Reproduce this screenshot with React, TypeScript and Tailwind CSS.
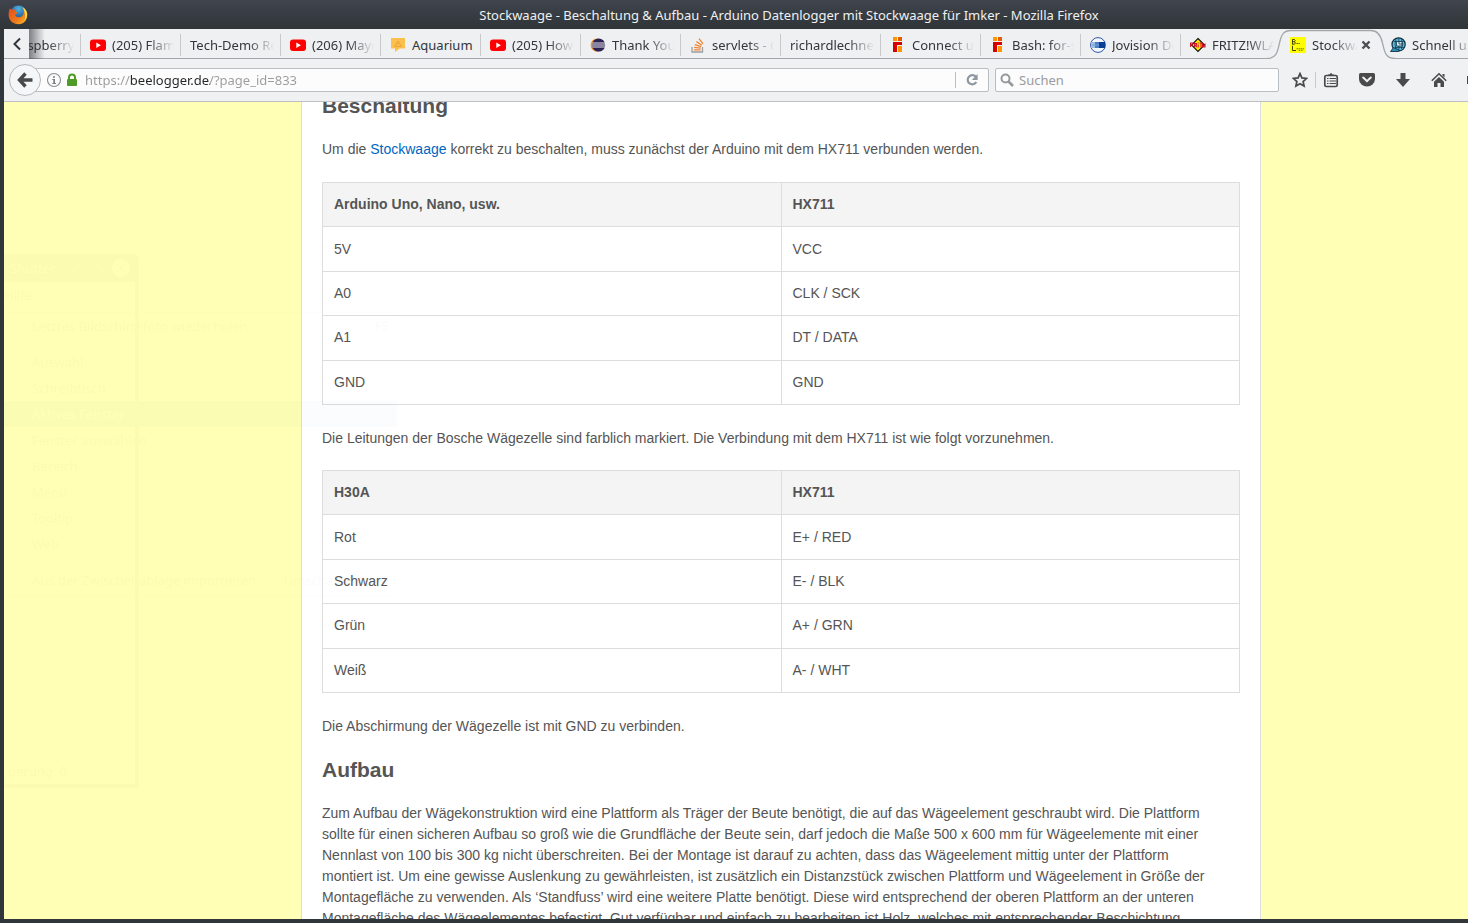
import type { ReactNode } from 'react';

const YouTube = () => (
  <svg viewBox="0 0 16 16" className="size-4 shrink-0">
    <rect x="0" y="2.5" width="16" height="11.5" rx="3" fill="#f00" />
    <path d="M6.3 5.6v5.3l4.6-2.65z" fill="#fff" />
  </svg>
);

const Aquarium = () => (
  <svg viewBox="0 0 16 16" className="size-4 shrink-0">
    <path d="M1 1h14v10.5H9.5L5 15v-3.5H1z" fill="#fcc14c" />
    <path d="M8 4l3.5 5.5h-7z" fill="none" stroke="#eba440" />
    <path d="M8 6v2" stroke="#eba440" />
  </svg>
);

const Eclipse = () => (
  <svg viewBox="0 0 16 16" className="size-4 shrink-0">
    <circle cx="7.2" cy="8" r="6.6" fill="#f7941e" />
    <circle cx="8.6" cy="8" r="6.6" fill="#2c2255" />
    <path d="M2.3 6h13M2 8h13.4M2.3 10h13" stroke="#fff" strokeWidth="0.9" />
  </svg>
);

const StackOverflow = () => (
  <svg viewBox="0 0 16 16" className="size-4 shrink-0">
    <path d="M2 10v5h10.5v-5" fill="none" stroke="#9a9fa3" strokeWidth="1.3" />
    <path d="M4 12.8h6.6M4.1 10.4l6.6.7M4.8 7.7l6.3 1.9M6.4 4.6l5.5 3.7M9 1.6l4 5.3" stroke="#f08534" strokeWidth="1.3" />
  </svg>
);

const Blocks = () => (
  <svg viewBox="0 0 16 16" className="size-4 shrink-0" shapeRendering="crispEdges">
    <path d="M3 0h4v4H3zM8 9h4v6H8z" fill="#ff9500" />
    <path d="M8 0h4v4H8z" fill="#e85b00" />
    <path d="M3 5h9v3H7v7H3z" fill="#d60000" />
  </svg>
);

const Jovision = () => (
  <svg viewBox="0 0 16 16" className="size-4 shrink-0">
    <circle cx="8" cy="8" r="7.4" fill="#f4f7fb" stroke="#2b57a5" strokeWidth="1" />
    <rect x="1" y="5" width="14" height="6" fill="#4a80c4" />
    <rect x="1" y="5" width="4" height="6" fill="#9dbde4" />
    <rect x="9" y="5" width="6" height="6" fill="#0d3f94" />
    <path d="M2 8h7" stroke="#7aa3d8" />
  </svg>
);

const Fritz = () => (
  <svg viewBox="0 0 16 16" className="size-4 shrink-0">
    <path d="M8 1.5l6.5 6.5L8 14.5 1.5 8z" fill="#ffe600" stroke="#111" strokeWidth="1.1" />
    <path
      d="M.5 10V6h3M.5 8h2M4.500 10V6.500H6.500V8H5l1.800 2.200M8.200 7.500v3M8.200 5.500v1M9.500 6h3M11 6v4.500M12.500 6.500v3.500h2.500V6.500"
      fill="none"
      stroke="#d8102c"
      strokeWidth="1.1"
    />
  </svg>
);

const BeeLogger = () => (
  <svg viewBox="0 0 16 16" className="size-4 shrink-0">
    <rect width="16" height="16" fill="#ff0" />
    <path d="M2.500 2.500h2q1.500 1 0 2.200h-2M4.500 4.700q1.800 1.300 0 2.500h-2M2.500 2.500v5M2.500 8.800v4.700h3.500" fill="none" stroke="#333300" strokeWidth="0.9" />
    <path d="M6.500 6.500h1.300M8.500 6.500h1.300" stroke="#55550a" strokeWidth="1.200" />
    <path d="M6.500 11.800h8M8.700 13.300h1.600M11 13.300h1.600" stroke="#6b6b12" strokeWidth="0.900" strokeDasharray="1.500 0.500" />
  </svg>
);

const Globe = () => (
  <svg viewBox="0 0 16 16" className="size-4 shrink-0">
    <circle cx="8.6" cy="7.4" r="6.6" fill="#5bb9dc" stroke="#123244" strokeWidth="1.2" />
    <path d="M4 4.500h9.500M5 10.500h9M8.800 1.500v12M6 2.500q-2 5 0 9.500M11.500 2.500q2.200 5 0 9.500" fill="none" stroke="#123244" strokeWidth="0.7" />
    <path d="M6.500 4.500h5.500v4.500H6.500z" fill="#d8f0fa" stroke="#123244" strokeWidth="0.8" />
    <path d="M9 4.500v2.500h3" fill="none" stroke="#123244" strokeWidth="0.8" />
    <path d="M.5 14.500L3.500 10.500l6.500 3-2 1z" fill="#2d8fb5" stroke="#123244" strokeWidth="0.9" />
  </svg>
);

const tabsBefore: { title: string; icon?: ReactNode; fits?: boolean }[] = [
  { title: 'Raspberry P', icon: <span className="size-4 shrink-0" /> },
  { title: '(205) Flame', icon: <YouTube /> },
  { title: 'Tech-Demo Re' },
  { title: '(206) Mayd', icon: <YouTube /> },
  { title: 'Aquarium', icon: <Aquarium />, fits: true },
  { title: '(205) How t', icon: <YouTube /> },
  { title: 'Thank You', icon: <Eclipse /> },
  { title: 'servlets - C', icon: <StackOverflow /> },
  { title: 'richardlechner' },
  { title: 'Connect us', icon: <Blocks /> },
  { title: 'Bash: for-s', icon: <Blocks /> },
  { title: 'Jovision De', icon: <Jovision /> },
  { title: 'FRITZ!WLAN', icon: <Fritz /> },
];

const fade = 'mask-[linear-gradient(to_right,black_calc(100%-26px),transparent)]';

function Tab({ title, icon, fits, last }: { title: string; icon?: ReactNode; fits?: boolean; last?: boolean }) {
  return (
    <button
      role="tab"
      aria-selected="false"
      className="flex h-[30px] w-[100px] shrink-0 items-center pt-[2px] text-left"
    >
      <span className="flex min-w-0 flex-1 items-center gap-[6px] pl-[9px] pr-[6px]">
        {icon}
        <span className={`min-w-0 flex-1 overflow-hidden whitespace-nowrap ${fits ? '' : fade}`}>{title}</span>
      </span>
      <span className={`h-[22px] w-px ${last ? '' : 'bg-[#c6c8ca]'}`} />
    </button>
  );
}

function TabStrip() {
  return (
    <div className="flex h-[30px] shrink-0 bg-[#eff0f1] shadow-[inset_0_-1px_0_#a2a7aa]">
      <button aria-label="Tabs nach links" className="flex w-[25px] shrink-0 items-center justify-center">
        <svg viewBox="0 0 12 14" className="h-[14px] w-3">
          <path d="M9 1.5L3.5 7 9 12.5" fill="none" stroke="#31363b" strokeWidth="2" />
        </svg>
      </button>
      <div role="tablist" className="relative flex min-w-0 flex-1 overflow-hidden">
        <div className="-ml-12 flex">
          {tabsBefore.map((t, i) => (
            <Tab key={i} {...t} last={i === tabsBefore.length - 1} />
          ))}
          <div className="relative flex h-[30px] w-[100px] shrink-0 items-center pl-[9px] pr-[7px] pt-[2px]">
            <svg viewBox="0 0 128 30" className="absolute -left-[14px] top-0 h-[30px] w-32">
              <path
                d="M0 29.5C10 29.5 10.500 22 12.500 14C14.500 5 17 1.500 24 1.500H104C110 1.500 113.500 5 115.500 14C117.500 22 118 29.500 128 29.500V30H0z"
                fill="#f0f1f3"
              />
              <path
                d="M0 29.5C10 29.5 10.500 22 12.500 14C14.500 5 17 1.500 24 1.500H104C110 1.500 113.500 5 115.500 14C117.500 22 118 29.500 128 29.500"
                fill="none"
                stroke="#a2a7aa"
                strokeWidth="1.3"
              />
            </svg>
            <button role="tab" aria-selected="true" className="relative flex min-w-0 flex-1 items-center gap-[6px] text-left">
              <BeeLogger />
              <span className={`min-w-0 flex-1 overflow-hidden whitespace-nowrap ${fade}`}>Stockwaage</span>
            </button>
            <button aria-label="Tab schließen" className="relative flex w-4 items-center justify-center">
              <svg viewBox="0 0 10 10" className="size-[10px]">
                <path d="M1.500 1.500l7 7M8.500 1.500l-7 7" stroke="#4a4f53" strokeWidth="2.400" />
              </svg>
            </button>
          </div>
          <Tab title="Schnell und" icon={<Globe />} last />
        </div>
        <span className="absolute inset-y-0 left-0 w-4 bg-linear-to-r from-[#31363b]/60 to-transparent" />
      </div>
    </div>
  );
}

function ToolButton({ label, children }: { label: string; children: ReactNode }) {
  return (
    <button aria-label={label} className="flex w-9 shrink-0 items-center justify-center">
      {children}
    </button>
  );
}

function NavBar() {
  return (
    <div className="flex h-[43px] shrink-0 items-center overflow-hidden border-b border-[#bcc0c3] bg-[#f0f1f3]">
      <div className="flex min-w-0 flex-1 items-center pl-[5px]">
        <button
          aria-label="Zurück"
          className="z-10 flex size-8 shrink-0 items-center justify-center rounded-full border border-[#b4b9bc] bg-[#f5f6f7]"
        >
          <svg viewBox="0 0 16 16" className="size-4">
            <path d="M8.500 1.500L2.500 8l6 6.500M2.500 8h13" fill="none" stroke="#4a4a4a" strokeWidth="3.400" />
          </svg>
        </button>
        <div className="-ml-4 flex h-6 min-w-0 flex-1 items-center rounded-r-xs border border-[#b9bec2] bg-[#fcfcfc] pl-5">
          <svg viewBox="0 0 16 16" className="size-4 shrink-0">
            <circle cx="8" cy="8" r="6.500" fill="none" stroke="#8a8e91" strokeWidth="1.100" />
            <path d="M7 4.200h2v1.600H7zM6.300 7H9v4h1v1H6.300v-1h1V8h-1z" fill="#7c8083" />
          </svg>
          <svg viewBox="0 0 12 14" className="ml-1 h-[14px] w-3 shrink-0">
            <path d="M3 7V4.500a3 3 0 016 0V7" fill="none" stroke="#4e9a26" strokeWidth="2" />
            <rect x="1" y="6" width="10" height="7" rx="1" fill="#4e9a26" />
          </svg>
          <input
            aria-label="Adresse"
            defaultValue="https://beelogger.de/?page_id=833"
            className="ml-[7px] min-w-0 flex-1 bg-[linear-gradient(90deg,#999b9d_45px,#232629_45px,#232629_125px,#999b9d_125px)] bg-clip-text text-transparent outline-none"
          />
          <span className="h-4 w-px bg-[#b9bec2]" />
          <button aria-label="Neu laden" className="flex w-8 justify-center">
            <svg viewBox="0 0 14 14" className="size-[14px]">
              <path d="M10.800 3.800A4.600 4.600 0 1011.300 9" fill="none" stroke="#8e979f" strokeWidth="2.200" />
              <path d="M12.600 1v6H6.800z" fill="#8e979f" />
            </svg>
          </button>
        </div>
      </div>
      <label className="ml-[6px] flex h-6 w-[284px] shrink-0 items-center rounded-xs border border-[#b9bec2] bg-[#fcfcfc] pl-1">
        <svg viewBox="0 0 14 14" className="size-[14px] shrink-0">
          <circle cx="5.500" cy="5.500" r="4" fill="none" stroke="#96999b" strokeWidth="2" />
          <path d="M8.500 8.500l4.500 4.500" stroke="#96999b" strokeWidth="2.600" />
        </svg>
        <input
          aria-label="Suchen"
          placeholder="Suchen"
          className="ml-[5px] min-w-0 flex-1 outline-none placeholder:text-[#999b9d]"
        />
      </label>
      <div className="flex shrink-0 items-center self-stretch pl-[3px]">
        <ToolButton label="Lesezeichen setzen">
          <svg viewBox="0 0 16 16" className="size-4">
            <path
              d="M8 1.600l1.900 4.300 4.700.5-3.500 3.100 1 4.600L8 11.700l-4.100 2.400 1-4.600-3.500-3.100 4.700-.5z"
              fill="none"
              stroke="#4a4a4a"
              strokeWidth="1.700"
            />
          </svg>
        </ToolButton>
        <span className="-ml-[3px] h-4 w-px bg-[#c9cccf]" />
        <div className="-ml-[3px] flex">
          <ToolButton label="Lesezeichen">
            <svg viewBox="0 0 16 16" className="size-4">
              <rect x="1.800" y="3.500" width="12.400" height="11" rx="1.500" fill="none" stroke="#4a4a4a" strokeWidth="1.700" />
              <path d="M5 4V2.500h1.500L8 .8l1.500 1.700H11V4z" fill="#4a4a4a" />
              <path d="M4 6.500h1.500M6.500 6.500H13M4 9h1.500M6.500 9H13M4 11.500h1.500M6.500 11.500H13" stroke="#4a4a4a" strokeWidth="1.200" />
            </svg>
          </ToolButton>
          <ToolButton label="Pocket">
            <svg viewBox="0 0 16 16" className="size-4">
              <path d="M1.500 1h13q1.500 0 1.500 1.500V7a8 7.500 0 01-16 0V2.500Q0 1 1.500 1z" fill="#4a4a4a" />
              <path d="M4.200 5.500L8 9.200l3.800-3.700" fill="none" stroke="#f0f1f3" strokeWidth="2" strokeLinecap="round" />
            </svg>
          </ToolButton>
          <ToolButton label="Downloads">
            <svg viewBox="0 0 16 16" className="size-4">
              <path d="M5.500 1h5v6H15l-7 8-7-8h4.500z" fill="#4a4a4a" />
            </svg>
          </ToolButton>
          <ToolButton label="Startseite">
            <svg viewBox="0 0 16 16" className="size-4">
              <path d="M.8 8.800L8 1.800l7.200 7" fill="none" stroke="#4a4a4a" strokeWidth="1.600" />
              <path d="M11.500 2H13.500v3.500l-2-2zM3 9.800l5-4.800 5 4.800V15H9.500v-4h-3v4H3z" fill="#4a4a4a" />
            </svg>
          </ToolButton>
          <span className="-mr-2 ml-[10px] h-2 w-[9px] self-center bg-[#c4121a]" />
        </div>
      </div>
    </div>
  );
}

function PinTable({ head, rows }: { head: [string, string]; rows: [string, string][] }) {
  return (
    <table className="h-[223px] w-full table-fixed border-collapse text-left">
      <tbody>
        <tr className="h-11 bg-[#f4f4f4]">
          {head.map((h) => (
            <th key={h} scope="col" className="border border-[#ddd] px-[11px] font-bold">
              {h}
            </th>
          ))}
        </tr>
        {rows.map((r) => (
          <tr key={r[0]} className="h-11">
            <td className="border border-[#ddd] px-[11px]">{r[0]}</td>
            <td className="border border-[#ddd] px-[11px]">{r[1]}</td>
          </tr>
        ))}
      </tbody>
    </table>
  );
}

const menuEntries = ['Auswahl', 'Schreibtisch', 'Aktives Fenster', 'Fenster auswählen', 'Bereich', 'Menü', 'Tooltip', 'Web'];

function FadingWindow() {
  return (
    <div
      aria-hidden="true"
      className="pointer-events-none absolute left-0 top-[152px] h-[534px] w-[393px] font-['Noto_Sans',sans-serif] text-[13px] leading-[26px] opacity-[0.022]"
    >
      <div className="flex h-full w-[135px] flex-col rounded-tr-md border-b-4 border-r-4 border-[#31363b]">
        <div className="flex h-7 items-center gap-3 bg-[#31363b] pl-[6px] text-white">
          Shutter
          <svg viewBox="0 0 64 18" className="h-[18px] w-16">
            <path d="M1 6l6 6 6-6M25 12l6-6 6 6" fill="none" stroke="#fff" />
            <circle cx="54" cy="9" r="9" fill="#fff" />
            <path d="M50 5l8 8M58 5l-8 8" stroke="#31363b" />
          </svg>
        </div>
        <span>Hilfe</span>
        <span className="mt-auto pl-1">gerung&nbsp; 0</span>
      </div>
      <div className="absolute inset-x-0 top-[58px] flex flex-col border-y border-[#31363b]/40 pb-[2px]">
        <div className="flex h-9 justify-between pl-7 pr-2">
          <span>Letztes Bildschirmfoto wiederholen</span>
          <span>F5</span>
        </div>
        {menuEntries.map((m) => (
          <span key={m} className={`pl-7 ${m === 'Aktives Fenster' ? 'bg-[#2f5f9f] text-white' : ''}`}>
            {m}
          </span>
        ))}
        <div className="mt-[10px] flex justify-between pl-7 pr-2">
          <span>Aus der Zwischenablage importieren</span>
          <span>Umschalt+Strg+V</span>
        </div>
      </div>
    </div>
  );
}

function Page() {
  return (
    <div className="relative grid min-h-0 flex-1 grid-cols-[297fr_minmax(0,960px)_207fr] overflow-hidden bg-[#ffffb5]">
      <main className="col-start-2 flex flex-col border-x border-[#ddd] bg-white px-5 font-['Liberation_Sans',Arial,sans-serif] text-[14px] leading-[21px] text-[#555]">
        <h2 className="-mt-[10px] text-[21px] font-bold leading-7">Beschaltung</h2>
        <p className="mb-[22px] mt-[19px]">
          Um die{' '}
          <a href="#stockwaage" className="text-[#0066bf]">
            Stockwaage
          </a>{' '}
          korrekt zu beschalten, muss zunächst der Arduino mit dem HX711 verbunden werden.
        </p>
        <PinTable
          head={['Arduino Uno, Nano, usw.', 'HX711']}
          rows={[
            ['5V', 'VCC'],
            ['A0', 'CLK / SCK'],
            ['A1', 'DT / DATA'],
            ['GND', 'GND'],
          ]}
        />
        <p className="mb-[21px] mt-[23px]">
          Die Leitungen der Bosche Wägezelle sind farblich markiert. Die Verbindung mit dem HX711 ist wie folgt vorzunehmen.
        </p>
        <PinTable
          head={['H30A', 'HX711']}
          rows={[
            ['Rot', 'E+ / RED'],
            ['Schwarz', 'E- / BLK'],
            ['Grün', 'A+ / GRN'],
            ['Weiß', 'A- / WHT'],
          ]}
        />
        <p className="mt-[23px]">Die Abschirmung der Wägezelle ist mit GND zu verbinden.</p>
        <h2 className="my-[19px] text-[21px] font-bold leading-7">Aufbau</h2>
        <p>
          Zum Aufbau der Wägekonstruktion wird eine Plattform als Träger der Beute benötigt, die auf das Wägeelement
          geschraubt wird. Die Plattform
          <br />
          sollte für einen sicheren Aufbau so groß wie die Grundfläche der Beute sein, darf jedoch die Maße 500 x 600 mm
          für Wägeelemente mit einer
          <br />
          Nennlast von 100 bis 300 kg nicht überschreiten. Bei der Montage ist darauf zu achten, dass das Wägeelement
          mittig unter der Plattform
          <br />
          montiert ist. Um eine gewisse Auslenkung zu gewährleisten, ist zusätzlich ein Distanzstück zwischen Plattform und
          Wägeelement in Größe der
          <br />
          Montagefläche zu verwenden. Als ‘Standfuss’ wird eine weitere Platte benötigt. Diese wird entsprechend der oberen
          Plattform an der unteren
          <br />
          Montagefläche des Wägeelementes befestigt. Gut verfügbar und einfach zu bearbeiten ist Holz, welches mit
          entsprechender Beschichtung
        </p>
      </main>
      <FadingWindow />
    </div>
  );
}

export default function App() {
  return (
    <div className="flex h-screen flex-col overflow-hidden bg-[#31363b] font-['Noto_Sans',sans-serif] text-[13px] leading-[18px] text-[#31363b]">
      <header className="flex h-[29px] shrink-0 items-center bg-linear-to-b from-[#40454e] to-[#2f3438] text-[#eff0f1]">
        <div className="w-[110px] shrink-0 pl-2">
          <svg viewBox="0 0 20 20" className="size-5">
            <defs>
              <linearGradient id="fox" x1="0" y1="0" x2="1" y2="1">
                <stop offset="0" stopColor="#e3491b" />
                <stop offset="0.600" stopColor="#ee7a1c" />
                <stop offset="1" stopColor="#fbc42d" />
              </linearGradient>
              <radialGradient id="world" cx="0.500" cy="0.200" r="0.800">
                <stop offset="0" stopColor="#4fb4e4" />
                <stop offset="1" stopColor="#0f3070" />
              </radialGradient>
            </defs>
            <circle cx="10.500" cy="9" r="8.500" fill="url(#world)" />
            <path
              d="M1.800 3.500Q3 3.800 4 4.800Q5.500 4 7.500 4.800L7 6.500L9.500 7.500Q9 9 7.200 9.500Q7.500 12.500 11 12.200Q14.500 12 15.500 8.500Q16 5 14 2.500Q18.500 4.500 19.300 9.500Q19.300 15 15.500 17.800Q10 21 4.500 17.500Q.5 14.500.6 9.500Q.6 6 1.800 3.500z"
              fill="url(#fox)"
            />
            <path d="M14.500 2q4.500 2.500 4.700 7.500-.2 4-2.700 6.500 1-3 .6-6.500Q16.500 5 14.500 2z" fill="#fddc4a" />
          </svg>
        </div>
        <h1 className="min-w-0 flex-1 truncate text-center">
          Stockwaage - Beschaltung &amp; Aufbau - Arduino Datenlogger mit Stockwaage für Imker - Mozilla Firefox
        </h1>
      </header>
      <div className="flex min-h-0 flex-1 flex-col pb-1 pl-1">
        <TabStrip />
        <NavBar />
        <Page />
      </div>
    </div>
  );
}
